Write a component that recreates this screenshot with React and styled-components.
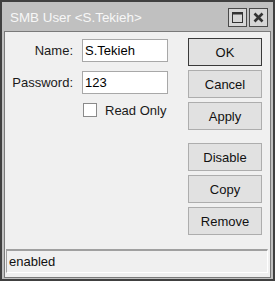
import React from "react";
import styled, { createGlobalStyle } from "styled-components";

const Global = createGlobalStyle`
  html, body { margin: 0; padding: 0; background: #ffffff; }
  body { font-family: "Liberation Sans", Arial, sans-serif; font-size: 13px; }
  * { box-sizing: border-box; }
`;

const Window = styled.div`
  width: 275px;
  height: 281px;
  border: 2px solid #404040;
  background: #c0c0c0;
  padding: 0 2px 1px 2px;
  display: flex;
  flex-direction: column;
`;

const TitleBar = styled.div`
  height: 29px;
  display: flex;
  align-items: center;
  padding: 1px 3px 0 6px;
`;

const Title = styled.div`
  flex: 1;
  color: #f7f7f7;
  font-size: 13.4px;
  padding-top: 1px;
  white-space: nowrap;
`;

const TitleButtons = styled.div`
  display: flex;
  gap: 2px;
`;

const TitleButton = styled.div`
  width: 19px;
  height: 19px;
  border: 1px solid #4a4a4a;
  background: #d6d6d6;
  display: flex;
  align-items: center;
  justify-content: center;
`;

const Content = styled.div`
  flex: 1;
  border: 1px solid #7a7a7a;
  background: #f0f0f0;
  display: flex;
  flex-direction: column;
`;

const Main = styled.div`
  display: flex;
  justify-content: space-between;
`;

const Form = styled.div`
  padding-top: 7px;
  display: grid;
  grid-template-columns: 68px 86px;
  column-gap: 9px;
  row-gap: 9px;
  align-content: start;
`;

const Label = styled.div`
  text-align: right;
  color: #1a1a1a;
  align-self: center;
  white-space: nowrap;
`;

const Input = styled.div`
  height: ${(p) => p.$h}px;
  border: 1px solid #a8a8a8;
  background: #ffffff;
  color: #000;
  padding: 0 0 0 2px;
  display: flex;
  align-items: center;
`;

const CheckRow = styled.label`
  grid-column: 2;
  display: flex;
  align-items: center;
  gap: 8px;
  height: 14px;
  padding-left: 1px;
  color: #1a1a1a;
`;

const Box = styled.span`
  width: 14px;
  height: 14px;
  border: 1px solid #8a8a8a;
  background: #ffffff;
`;

const Buttons = styled.div`
  width: 74px;
  margin-right: 8px;
  padding-top: 6px;
  display: flex;
  flex-direction: column;
  gap: 4px;
`;

const Button = styled.div`
  height: 28px;
  border: 1px solid ${(p) => (p.$default ? "#3a3a3a" : "#adadad")};
  background: #e1e1e1;
  color: #111;
  display: flex;
  align-items: center;
  justify-content: center;
  margin-top: ${(p) => (p.$sep ? "9px" : "0")};
`;

const Status = styled.div`
  margin: auto 2px 4px 1px;
  height: 24px;
  border-top: 2px solid #a0a0a0;
  border-left: 1px solid #a0a0a0;
  border-right: 1px solid #ffffff;
  border-bottom: 1px solid #ffffff;
  padding: 3px 0 0 2px;
  color: #111;
`;

const MaxIcon = () => (
  <svg width="11" height="11" viewBox="0 0 11 11">
    <rect x="0.5" y="0.5" width="10" height="10" fill="none" stroke="#333" strokeWidth="1" />
    <rect x="0" y="0" width="11" height="2.5" fill="#333" />
  </svg>
);

const CloseIcon = () => (
  <svg width="11" height="11" viewBox="0 0 11 11">
    <path d="M1.5 1.5 L9.5 9.5 M9.5 1.5 L1.5 9.5" stroke="#333" strokeWidth="2.6" />
  </svg>
);

export default function App() {
  return (
    <>
      <Global />
      <Window>
        <TitleBar>
          <Title>SMB User &lt;S.Tekieh&gt;</Title>
          <TitleButtons>
            <TitleButton><MaxIcon /></TitleButton>
            <TitleButton><CloseIcon /></TitleButton>
          </TitleButtons>
        </TitleBar>
        <Content>
          <Main>
            <Form>
              <Label>Name:</Label>
              <Input $h={23}>S.Tekieh</Input>
              <Label>Password:</Label>
              <Input $h={23}>123</Input>
              <CheckRow>
                <Box />
                Read Only
              </CheckRow>
            </Form>
            <Buttons>
              <Button $default>OK</Button>
              <Button>Cancel</Button>
              <Button>Apply</Button>
              <Button $sep>Disable</Button>
              <Button>Copy</Button>
              <Button>Remove</Button>
            </Buttons>
          </Main>
          <Status>enabled</Status>
        </Content>
      </Window>
    </>
  );
}
